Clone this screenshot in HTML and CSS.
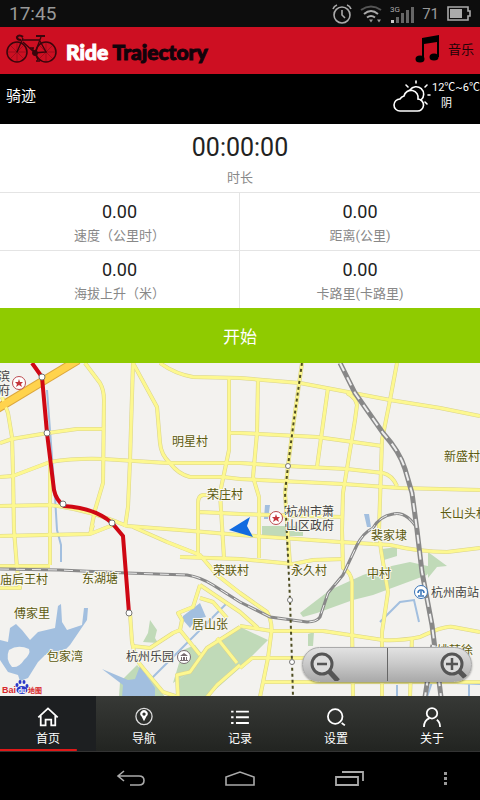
FILE: index.html
```html
<!DOCTYPE html>
<html lang="zh-CN">
<head>
    <meta charset="UTF-8">
    <meta name="viewport" content="width=device-width, initial-scale=1.0">
    <title>Ride Trajectory</title>
    <link rel="stylesheet" href="styles.css">
</head>
<body>
    <div class="status-bar">
        <span class="clock">17:45</span>
        <div class="status-icons">
            <svg width="20" height="20" viewBox="0 0 20 20" fill="none" stroke="#aaa" stroke-width="1.6">
                <circle cx="10" cy="11" r="8"/>
                <path d="M10 6v5l3 3M1 5q1-3 4-4M19 5q-1-3-4-4"/>
            </svg>
            <svg width="22" height="18" viewBox="0 0 22 18" fill="none" stroke="#aaa" stroke-width="2">
                <path d="M1 5q10-7 20 0" stroke="#555"/>
                <path d="M4 9q7-6 14 0M7 12.500q4-3 8 0"/>
                <path d="M9 14.500h4l-2 3zM17 14.500h4l-2 3z" fill="#999" stroke="none"/>
            </svg>
            <svg width="24" height="18" viewBox="0 0 24 18">
                <path d="M1 15h3v3H1z" fill="#ccc"/>
                <path d="M6 12h3v6H6zM11 8h3v10h-3zM16 5h3v13h-3zM21 2h3v16h-3z" fill="#666"/>
                <text class="net-type" x="0" y="7">3G</text>
            </svg>
            <span class="battery-level">71</span>
            <svg width="24" height="15" viewBox="0 0 24 15">
                <path d="M1 1h20v4h2v5h-2v4H1z" fill="none" stroke="#aaa" stroke-width="1.600"/>
                <path d="M3 3h12v9H3z" fill="#aaa"/>
            </svg>
        </div>
    </div>

    <header class="app-header">
        <svg class="bike" width="52" height="32" viewBox="0 0 52 32" fill="none" stroke="#3a060c">
            <circle cx="12" cy="19" r="10" stroke-width="1.500"/>
            <circle cx="41" cy="19" r="10" stroke-width="1.500"/>
            <path stroke-width=".3" d="M2 19h20M12 9v20M5 12l14 14M19 12L5 26M31 19h20M41 9v20M34 12l14 14M48 12L34 26"/>
            <path stroke-width="1.300" d="M12 19L18 5M17 7h18M18 9l12 11M30 20L36 4M30 20l11-1L35 8"/>
            <path stroke-width="2.200" d="M31 3h9M18 4q-4-3-6 0q0 3 4 3"/>
            <circle cx="30" cy="20" r="2.500" fill="#3a060c"/>
            <path stroke-width="1.400" d="M30 20l3 7M31 28h4M30 20l-3-5M25 15h4"/>
        </svg>
        <h1 class="logo"><span class="logo-light">Ride</span> Trajectory</h1>
        <button class="music-button">
            <svg width="26" height="30" viewBox="0 0 26 30">
                <path d="M7 4L24 1v22h-2V8L9 10v15H7z"/>
                <ellipse cx="5" cy="25" rx="4.500" ry="3.500"/>
                <ellipse cx="19" cy="23" rx="4.500" ry="3.500"/>
            </svg>
            音乐
        </button>
    </header>

    <div class="title-bar">
        <h2>骑迹</h2>
        <div class="weather">
            <svg width="40" height="34" viewBox="0 0 40 34" fill="none" stroke="#fff" stroke-width="1.600" stroke-linecap="round">
                <path d="M8 31h17a6 6 0 0 0 1-12a7 7 0 0 0-14-3a6 6 0 0 0-4 3a6 6 0 0 0 0 12z"/>
                <path d="M18 10a7.500 7.500 0 1 1 11 10M24 1v2M14 5l2 2M35 5l-2 2M36 15h2M33 22l2 2"/>
            </svg>
            <div class="weather-text">
                <div>12℃~6℃</div>
                <div class="weather-sky">阴</div>
            </div>
        </div>
    </div>

    <section class="duration">
        <div class="duration-value">00:00:00</div>
        <div class="label">时长</div>
    </section>
    <section class="stats">
        <div class="stat">
            <div class="value">0.00</div>
            <div class="label">速度（公里时）</div>
        </div>
        <div class="stat">
            <div class="value">0.00</div>
            <div class="label">距离(公里)</div>
        </div>
        <div class="stat">
            <div class="value">0.00</div>
            <div class="label">海拔上升（米）</div>
        </div>
        <div class="stat">
            <div class="value">0.00</div>
            <div class="label">卡路里(卡路里)</div>
        </div>
    </section>
    <button class="start-button">开始</button>

    <main class="map">
        <svg class="map-canvas" viewBox="0 363 480 333" preserveAspectRatio="xMidYMid slice">
            <defs>
                <g id="roads">
                    <path d="M2 397L8 413L12 437L13 473L14 530L17 568L20 588H0"/>
                    <path d="M0 443L12 439L48 433L77 429H103"/>
                    <path d="M0 477L13 476L50 462Q75 458 103 459L167 463H240L287 466L347 469L383 473Q392 475 397 486"/>
                    <path d="M85 363L100 383Q104 390 104 400L103 483L95 510L91 530"/>
                    <path d="M133 363L130 460L128 507L125 527"/>
                    <path d="M133 363L157 407L160 443Q161 455 170 463Q178 474 190 477H223L240 479L343 484L400 488L480 490"/>
                    <path d="M160 363Q175 374 193 377L240 378L300 383L353 393L390 400L440 408L480 416"/>
                    <path d="M229 378V450L220 493L224 558M230 433H240L317 437L382 446"/>
                    <path d="M0 506L50 505Q90 510 127 526L180 530L240 535L340 542L390 545Q420 552 447 552L480 548"/>
                    <path d="M50 463V565M0 566H50M0 536L90 534L113 525M90 534L93 525"/>
                    <path d="M220 495H203Q198 496 198 503V558M200 512L240 514L342 517M180 557L240 559L293 564L313 560L343 559"/>
                    <path d="M258 380L257 433L253 477L259 497V558M328 388L317 467"/>
                    <path d="M347 393Q356 398 357 405L355 420L343 493L342 530L343 568Q351 572 352 582V625L353 697"/>
                    <path d="M397 363L390 400L382 440L379 530L381 550L388 592L382 632V697"/>
                    <path d="M302 363L293 427L288 466L285 493L290 565"/>
                    <path d="M133 527L167 542L200 555L217 575L240 593L267 612Q273 622 271 635L268 658L260 697"/>
                    <path d="M200 585L240 612L258 628M240 626L272 631H323L383 640Q400 641 420 637Q445 625 453 627L480 632"/>
                    <path d="M240 668L252 658H310M263 682H480M412 638L410 697"/>
                    <path d="M130 613L132 642Q135 660 143 668L163 692L178 697"/>
                    <path d="M132 646L150 648L173 633L180 630L182 620L178 613L193 607L200 585M200 598L213 602L227 618M180 630L200 655"/>
                    <path d="M240 627L207 648L190 672L177 675L178 697M217 638L237 663M240 665L217 685L207 697"/>
                </g>
            </defs>

            <rect x="-500" y="0" width="1500" height="1500" fill="#f3f2ef"/>

            <!-- parks -->
            <g fill="#c0dab8">
                <path d="M150 620L157 630L155 638L158 643L143 642L148 633z"/>
                <path d="M240 627L207 648L190 672L178 680L180 697H207L240 668L268 640zM183 650L195 645L203 655L190 672L173 683z"/>
                <path d="M119 697L120 682L137 665L160 690L165 697z"/>
                <path d="M300 613L313 603L330 590L363 575L387 567L410 562L432 567L427 575L373 595L353 600L317 613L303 617z"/>
                <path d="M382 549L397 547V556L384 560zM428 552L447 566L437 567L428 578zM262 526H303V536H262zM308 634L314 632L313 646H308z"/>
            </g>

            <!-- lakes and rivers -->
            <path fill="#a2bfdf" d="M0 640L8 642L10 628L16 624L22 630L30 640L38 632L55 628L58 606L61 604L62 622L67 630L82 625L84 608H88L87 620L70 645L60 655L45 655L38 662L28 678L20 681L18 675L8 672L0 660z"/>
            <path fill="#f3f2ef" d="M9 650Q18 644 29 649Q31 654 24 660Q19 668 12 667Q5 659 9 650z"/>
            <path fill="#a2bfdf" d="M183 616L200 603L206 617L196 619L190 628L183 620zM102 669L128 680L135 679L140 666L155 688V697H122L123 685zM265 505H270L268 519H264zM364 514H369L371 527H367z"/>
            <path fill="none" stroke="#a2bfdf" stroke-width="2" d="M228 602L152 678M47 390L55 497L57 530L61 545V562M380 622L400 602L414 600L419 622M397 685V697M427 697L432 682L480 684M469 684V697"/>

            <!-- roads: border first, then surface -->
            <use href="#roads" class="road road-border"/>
            <path d="M-10 413L78 360" stroke="#dca63c" stroke-width="9"/>
            <use href="#roads" class="road road-surface"/>
            <path d="M-10 413L78 360" stroke="#ffd34d" stroke-width="7"/>

            <!-- railways -->
            <g fill="none">
                <path class="rail" d="M0 569L60 570L127 573L187 575Q200 577 213 585L240 602L270 617L307 622Q317 622 320 617L328 593L343 575L357 545Q363 533 373 528Q380 516 393 514Q407 511 418 530"/>
                <path class="rail-gap" d="M0 569L60 570L127 573L187 575Q200 577 213 585L240 602L270 617L307 622Q317 622 320 617L328 593L343 575L357 545Q363 533 373 528Q380 516 393 514Q407 511 418 530"/>
                <path class="rail rail-wide" d="M340 363L355 393L383 433Q400 452 405 469L412 493L417 530L422 572L432 625L441 697M433 645L425 697"/>
                <path class="rail-gap rail-wide-gap" d="M340 363L355 393L383 433Q400 452 405 469L412 493L417 530L422 572L432 625L441 697M433 645L425 697"/>
                <path d="M302 363L293 427L288 466L285 493L290 600L292 662L293 697" stroke="#4e4d21" stroke-width="2" stroke-dasharray="3 3"/>
            </g>

            <!-- recorded track -->
            <path d="M32 363L42 377L47 433L54 490Q56 500 64 506Q95 508 112 523L123 536L129 613" fill="none" stroke="#cf0814" stroke-width="4"/>
            <g fill="#fff" stroke="#777">
                <circle cx="42" cy="377" r="3"/>
                <circle cx="47" cy="433" r="3"/>
                <circle cx="63" cy="504" r="3"/>
                <circle cx="112" cy="523" r="3"/>
                <circle cx="129" cy="613" r="3"/>
                <circle cx="288" cy="466" r="2.500"/>
                <circle cx="290" cy="600" r="2.500"/>
                <circle cx="292" cy="662" r="2.500"/>
            </g>

            <!-- markers -->
            <g stroke="#bd4b50" fill="#fff">
                <circle cx="19" cy="383" r="6.500"/>
                <circle cx="276" cy="518" r="6.500"/>
                <path fill="#c4343b" stroke="none" d="M19 379l1 3h3l-2 2l1 3l-3-2l-3 2l1-3l-2-2h3zM276 514l1 3h3l-2 2l1 3l-3-2l-3 2l1-3l-2-2h3z"/>
            </g>
            <circle cx="184" cy="657" r="6.500" fill="#fff" stroke="#776b70"/>
            <path d="M180 656l4-3l4 3zM181 657h1v3h-1zM183 657h2v3h-2zM186 657h1v3h-1zM180 660h8v1h-8z" fill="#776b70"/>
            <circle cx="421" cy="592" r="6.500" fill="#fff" stroke="#3974b8"/>
            <path d="M418 593a3 3 0 1 1 6 0M421 591v4M418 596h6" fill="none" stroke="#3974b8" stroke-width="1.500"/>
            <path d="M229 530L250 517L247 526L253 537z" fill="#126be0"/>

            <g class="place">
                <text x="172" y="446">明星村</text>
                <text x="207" y="499">荣庄村</text>
                <text x="444" y="461">新盛村</text>
                <text x="440" y="518">长山头村</text>
                <text x="371" y="540">裴家埭</text>
                <text x="213" y="575">荣联村</text>
                <text x="291" y="575">永久村</text>
                <text x="367" y="578">中村</text>
                <text x="0" y="584">庙后王村</text>
                <text x="82" y="583">东湖塘</text>
                <text x="14" y="618">傅家里</text>
                <text x="47" y="661">包家湾</text>
                <text x="192" y="629">居山张</text>
                <text x="437" y="655">姚韩徐</text>
            </g>
            <g class="place landmark">
                <text x="-2" y="381">滨</text>
                <text x="-2" y="395">府</text>
                <text x="286" y="516">杭州市萧</text>
                <text x="286" y="530">山区政府</text>
                <text x="431" y="597">杭州南站</text>
                <text x="126" y="661">杭州乐园</text>
            </g>

            <!-- map provider -->
            <text class="baidu" x="2" y="693">Bai</text>
            <g fill="#2b38c8">
                <ellipse cx="22" cy="690" rx="5.500" ry="4"/>
                <ellipse cx="17" cy="685" rx="1.500" ry="2"/>
                <ellipse cx="20" cy="682" rx="1.500" ry="2"/>
                <ellipse cx="24" cy="682" rx="1.500" ry="2"/>
                <ellipse cx="27" cy="686" rx="1.500" ry="2"/>
            </g>
            <text class="baidu-du" x="18" y="693">du</text>
            <text class="baidu-map" x="28" y="693">地图</text>
        </svg>
        <div class="zoom">
            <button class="zoom-button zoom-out" aria-label="缩小">
                <svg width="32" height="30" viewBox="0 0 32 30" fill="none" stroke="#555">
                    <path d="M19 18l10 11" stroke-width="5"/>
                    <circle cx="13" cy="12" r="10" stroke-width="3" fill="#ddd"/>
                    <path d="M8 12h10" stroke-width="2.500"/>
                </svg>
            </button>
            <button class="zoom-button zoom-in" aria-label="放大">
                <svg width="32" height="30" viewBox="0 0 32 30" fill="none" stroke="#555">
                    <path d="M19 18l9 9" stroke-width="5"/>
                    <circle cx="13" cy="12" r="10" stroke-width="3" fill="#ddd"/>
                    <path d="M7 12h12M13 6v12" stroke-width="2.500"/>
                </svg>
            </button>
        </div>
    </main>

    <nav class="tabs">
        <a class="tab active" href="#home">
            <svg width="28" height="26" viewBox="0 0 28 26" fill="none" stroke="#fff" stroke-width="2.200">
                <path d="M2 14L14 3L26 14M5 12v12h6v-7h7v7h5V12"/>
            </svg>
            首页
        </a>
        <a class="tab" href="#navi">
            <svg width="28" height="26" viewBox="0 0 28 26">
                <circle cx="14" cy="13" r="10" fill="none" stroke="#ddd" stroke-width="1.600"/>
                <path d="M14 19l-3-6a4.500 4.500 0 1 1 6 0zM14 8a2 2 0 1 0 .1 0z" fill="#fff" fill-rule="evenodd"/>
            </svg>
            导航
        </a>
        <a class="tab" href="#records">
            <svg width="28" height="26" viewBox="0 0 28 26" fill="none" stroke="#fff" stroke-width="2.400">
                <path d="M3 7h3M9 7h16M3 14h3M9 14h16M3 21h3M9 21h16"/>
            </svg>
            记录
        </a>
        <a class="tab" href="#settings">
            <svg width="28" height="26" viewBox="0 0 28 26" fill="none" stroke="#fff" stroke-width="2.200">
                <circle cx="13" cy="13" r="9"/>
                <path d="M21 21l4 3"/>
            </svg>
            设置
        </a>
        <a class="tab" href="#about">
            <svg width="28" height="26" viewBox="0 0 28 26" fill="none" stroke="#fff" stroke-width="2.200">
                <circle cx="14" cy="9" r="6.500"/>
                <path d="M4 26q0-8 7-11M20 17q4 3 4 9"/>
            </svg>
            关于
        </a>
    </nav>

    <div class="system-bar">
        <button aria-label="返回">
            <svg width="30" height="18" viewBox="0 0 30 18" fill="none" stroke="#aaa" stroke-width="1.600">
                <path d="M8 1L2 6l6 5M2 6h21q5 0 5 4.500T23 15h-9"/>
            </svg>
        </button>
        <button aria-label="主屏幕">
            <svg width="30" height="18" viewBox="0 0 30 18" fill="none" stroke="#aaa" stroke-width="1.600">
                <path d="M1 15V7L15 2l14 5v8z"/>
            </svg>
        </button>
        <button aria-label="最近任务">
            <svg width="30" height="18" viewBox="0 0 30 18" fill="none" stroke="#aaa" stroke-width="1.800">
                <path d="M2 7h22v8H2zM8 2h21v9"/>
            </svg>
        </button>
        <button class="overflow" aria-label="更多">
            <svg width="6" height="18" viewBox="0 0 6 18" fill="#999">
                <path d="M1 2h3v3H1zM1 7h3v3H1zM1 12h3v3H1z"/>
            </svg>
        </button>
    </div>
</body>
</html>
```

FILE: styles.css
```css
* {
    box-sizing: border-box;
}
body {
    font-family: Roboto, "Noto Sans CJK SC", sans-serif;
    margin: 0;
    min-height: 100vh;
    display: flex;
    flex-direction: column;
    background: #000;
}
button {
    font-family: inherit;
    border: none;
    padding: 0;
    background: none;
    cursor: pointer;
}
svg {
    display: block;
}
.status-bar {
    display: flex;
    justify-content: space-between;
    align-items: center;
    height: 27px;
    padding: 0 9px;
    background: #0d0d0d;
    color: #999;
}
.clock {
    font-size: 19px;
}
.status-icons {
    display: flex;
    align-items: center;
    gap: 8px;
}
.net-type {
    font-size: 8px;
    fill: #aaa;
}
.battery-level {
    font-size: 15px;
}
.app-header {
    display: flex;
    align-items: center;
    height: 47px;
    padding: 0 6px 4px 5px;
    background: #cd0f22;
}
.logo {
    flex: 1;
    margin: 0;
    padding: 6px 0 0 9px;
    font-family: Lato, sans-serif;
    font-size: 21px;
    line-height: 24px;
    font-weight: 900;
    color: #12030a;
    -webkit-text-stroke: 1px;
}
.logo-light {
    color: #fff;
}
.music-button {
    display: flex;
    align-items: center;
    gap: 7px;
    font-size: 13px;
    color: #200408;
}
.title-bar {
    display: flex;
    justify-content: space-between;
    height: 50px;
    padding: 6px 0 0 6px;
    color: #fff;
}
.title-bar h2 {
    margin: 0;
    font-size: 15px;
    font-weight: normal;
    line-height: 32px;
}
.weather {
    display: flex;
}
.weather-text {
    font-size: 11px;
    line-height: 16px;
}
.weather-sky {
    padding-left: 9px;
}
.duration {
    height: 69px;
    padding-top: 8px;
    background: #fff;
    border-bottom: 1px solid #e4e4e4;
    text-align: center;
}
.duration-value {
    font-size: 25px;
    line-height: 32px;
    color: #222;
}
.label {
    font-size: 13px;
    line-height: 28px;
    color: #888;
}
.stats {
    display: grid;
    grid-template-columns: 1fr 1fr;
    background: #fff;
    text-align: center;
}
.stat {
    height: 58px;
    padding-top: 8px;
    border-bottom: 1px solid #e4e4e4;
}
.stat:nth-child(odd) {
    border-right: 1px solid #e4e4e4;
}
.stat:nth-child(n+3) {
    height: 57px;
    border-bottom: none;
}
.value {
    font-size: 18px;
    line-height: 21px;
    color: #222;
}
.start-button {
    height: 55px;
    background: #8fcb00;
    color: #fff;
    font-size: 17px;
}
.map {
    position: relative;
    flex: 1;
    min-height: 200px;
    background: #f3f2ef;
}
.map-canvas {
    position: absolute;
    width: 100%;
    height: 100%;
}
.road {
    fill: none;
    stroke-linejoin: round;
}
.road-border {
    stroke: #d9d38c;
    stroke-width: 4px;
}
.road-surface {
    stroke: #fdf890;
    stroke-width: 3px;
}
.rail {
    stroke: #888;
    stroke-width: 3px;
}
.rail-gap {
    stroke: #eee;
    stroke-width: 1px;
    stroke-dasharray: 9px 7px;
}
.rail-wide {
    stroke-width: 5px;
}
.rail-wide-gap {
    stroke-width: 2px;
}
.place {
    font-size: 12px;
    fill: #5c5a10;
    stroke: #f8f7f0;
    stroke-width: 2px;
    paint-order: stroke;
}
.landmark {
    fill: #444;
}
.baidu {
    font-family: "Liberation Sans", sans-serif;
    font-size: 9px;
    font-weight: bold;
    fill: #d8282c;
}
.baidu-du {
    font-size: 7px;
    font-weight: bold;
    fill: #fff;
}
.baidu-map {
    font-size: 7px;
    font-weight: bold;
    fill: #d8282c;
}
.zoom {
    position: absolute;
    right: 8px;
    bottom: 14px;
    display: flex;
    width: 170px;
    height: 35px;
    border: 1px solid #aaa;
    border-radius: 18px;
    background: linear-gradient(#e2e2e2, #c8c8c8 50%, #aaa);
    box-shadow: 0 1px 2px rgba(0,0,0,0.4);
    overflow: hidden;
}
.zoom-button {
    width: 50%;
    display: flex;
    align-items: center;
    padding: 4px 0 0 6px;
}
.zoom-in {
    justify-content: flex-end;
    padding: 4px 0 0;
    border-left: 1px solid #666;
}
.tabs {
    display: flex;
    height: 56px;
    background: linear-gradient(#373936, #222421);
    border-bottom: 1px solid #333;
}
.tab {
    flex: 1;
    display: flex;
    flex-direction: column;
    align-items: center;
    padding-top: 10px;
    color: #fff;
    font-size: 12px;
    line-height: 24px;
    text-decoration: none;
}
.tab.active {
    background: linear-gradient(#e01818, #e01818) left bottom / 80% 2px no-repeat, #1d1f21;
}
.system-bar {
    display: flex;
    justify-content: center;
    align-items: center;
    gap: 79px;
    height: 48px;
    padding: 6px 0 0 87px;
    background: #000;
}
.overflow {
    padding-right: 2px;
}
```
